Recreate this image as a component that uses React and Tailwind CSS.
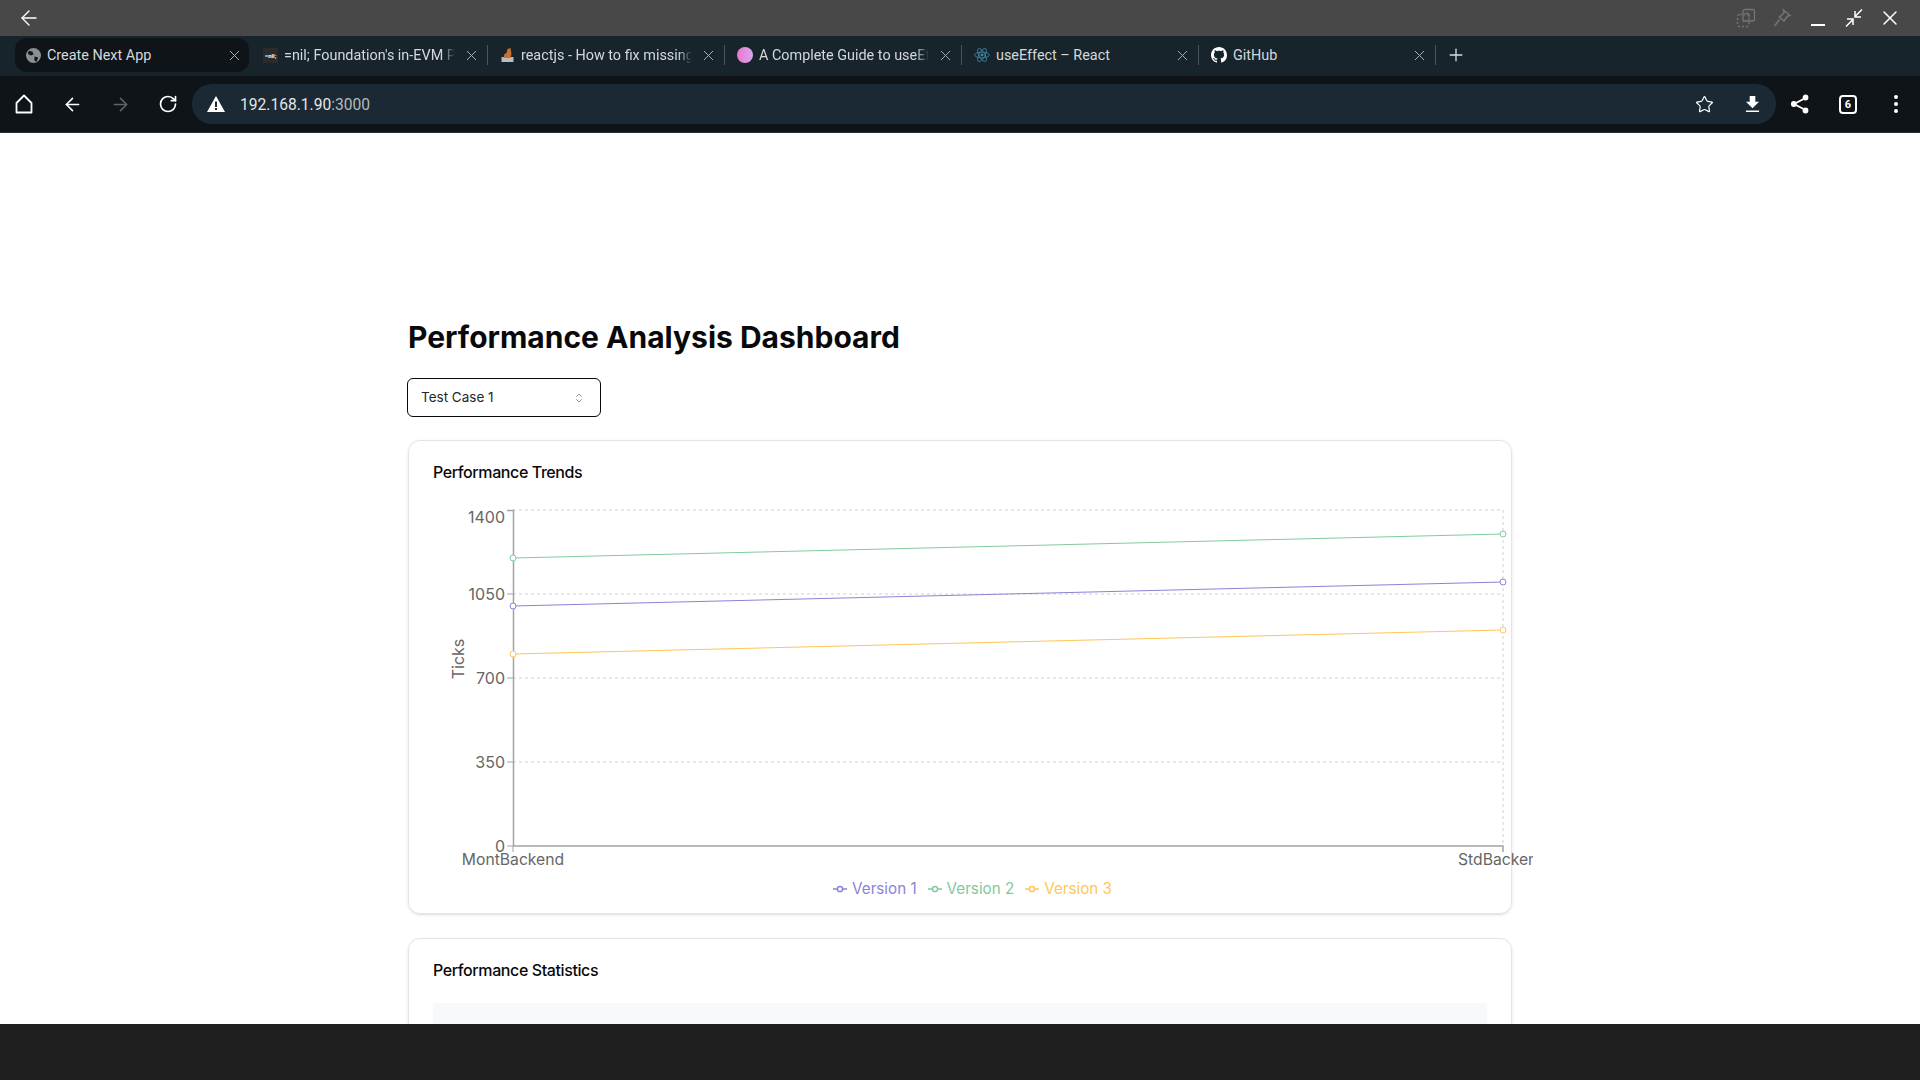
import { ArrowLeft, ArrowRight, RotateCw, Star, Plus, X, ChevronsUpDown } from 'lucide-react';

const tabs = [
  { title: 'Create Next App', active: true, icon: 'globe' },
  { title: "=nil; Foundation's in-EVM Proof", icon: 'nil', fade: true },
  { title: 'reactjs - How to fix missing dependency', icon: 'so', fade: true },
  { title: 'A Complete Guide to useEffect', icon: 'ball', fade: true },
  { title: 'useEffect – React', icon: 'react' },
  { title: 'GitHub', icon: 'github' },
];

function TabIcon({ type }) {
  if (type === 'globe') return (
    <svg viewBox="0 0 16 16" className="w-[15px] h-[15px] shrink-0">
      <circle cx="8" cy="8" r="8" fill="#8a8f93" />
      <path d="M3 3l4 1 1 3-3 1-3-2zM9 9l4 1-2 5-2-2z" fill="#0e1418" />
    </svg>
  );
  if (type === 'nil') return <div className="w-[15px] h-[15px] shrink-0 bg-[#2b2b2b] text-white text-[6px] leading-[15px] text-center font-bold overflow-hidden">=nil;</div>;
  if (type === 'so') return (
    <svg viewBox="0 0 14 16" className="w-[15px] h-[16px] shrink-0">
      <path d="M1 15v-5h12v5z" fill="#bcbbbb" />
      <path d="M3 11l1-4 2-1 1-4 3-1 1 6-1 4z" fill="#c8702c" />
    </svg>
  );
  if (type === 'ball') return <div className="w-[16px] h-[16px] shrink-0 rounded-full bg-gradient-to-r from-[#ee74cf] to-[#d5a6ec]" />;
  if (type === 'react') return (
    <svg viewBox="-12 -12 24 24" className="w-[16px] h-[16px] shrink-0" fill="none" stroke="#3f8ba8" strokeWidth="1.2">
      <circle r="2.2" fill="#3f8ba8" stroke="none" />
      <ellipse rx="11" ry="4.4" />
      <ellipse rx="11" ry="4.4" transform="rotate(60)" />
      <ellipse rx="11" ry="4.4" transform="rotate(120)" />
    </svg>
  );
  return (
    <svg viewBox="0 0 16 16" className="w-[16px] h-[16px] shrink-0" fill="#fff">
      <path d="M8 0C3.58 0 0 3.58 0 8c0 3.54 2.29 6.53 5.47 7.59.4.07.55-.17.55-.38 0-.19-.01-.82-.01-1.49-2.01.37-2.53-.49-2.69-.94-.09-.23-.48-.94-.82-1.13-.28-.15-.68-.52-.01-.53.63-.01 1.08.58 1.23.82.72 1.21 1.87.87 2.33.66.07-.52.28-.87.51-1.07-1.78-.2-3.64-.89-3.64-3.95 0-.87.31-1.59.82-2.15-.08-.2-.36-1.02.08-2.12 0 0 .67-.21 2.2.82.64-.18 1.32-.27 2-.27s1.36.09 2 .27c1.53-1.04 2.2-.82 2.2-.82.44 1.1.16 1.92.08 2.12.51.56.82 1.27.82 2.15 0 3.07-1.87 3.75-3.65 3.95.29.25.54.73.54 1.48 0 1.07-.01 1.93-.01 2.2 0 .21.15.46.55.38A8.01 8.01 0 0 0 16 8c0-4.42-3.58-8-8-8z" />
    </svg>
  );
}

function Tab({ tab }) {
  return (
    <>
      <div className={`w-[234px] h-[34px] shrink-0 flex items-center gap-[6px] pl-[11px] pr-[6px] rounded-[12px] ${tab.active ? 'bg-[#0e1418]' : ''}`}>
        <TabIcon type={tab.icon} />
        <span className={`flex-1 min-w-0 whitespace-nowrap overflow-hidden text-[14.4px] leading-[20px] pt-px text-[#d4d8da] ${tab.fade ? '[mask-image:linear-gradient(to_right,black_92%,transparent)]' : ''}`}>{tab.title}</span>
        <X className="w-[17px] h-[17px] text-[#a9aeb1] shrink-0 ml-[2px]" strokeWidth={1.4} />
      </div>
      <div className="w-[3px] h-[20px] shrink-0 flex justify-center">
        {!tab.active && <div className="w-px h-full bg-[#4b5459]" />}
      </div>
    </>
  );
}

function LegendItem({ label, color, stroke }) {
  return (
    <div className={`flex items-center gap-[5px] ${color}`}>
      <svg viewBox="0 0 14 14" className="w-[14px] h-[14px]" fill="none" stroke={stroke} strokeWidth="1.5">
        <path d="M0 7h4.500M9.500 7h4.500" />
        <circle cx="7" cy="7" r="2.6" />
      </svg>
      <span>{label}</span>
    </div>
  );
}

function TrendChart() {
  const gridY = [510, 594, 678, 762];
  const ticks = [
    { label: '1400', y: 523 },
    { label: '1050', y: 600 },
    { label: '700', y: 684 },
    { label: '350', y: 768 },
    { label: '0', y: 852 },
  ];
  const series = [
    { color: '#8884d8', y1: 606, y2: 582 },
    { color: '#82ca9d', y1: 558, y2: 534 },
    { color: '#ffc658', y1: 654, y2: 630 },
  ];
  return (
    <svg viewBox="408 490 1104 385" className="w-[1104px] h-[385px] overflow-visible block">
      <defs>
        <clipPath id="chart-clip"><rect x="408" y="490" width="1125" height="385" /></clipPath>
      </defs>
      <g stroke="#d0d0d0" strokeDasharray="3 3" fill="none">
        {gridY.map((y) => <line key={y} x1="513" x2="1503" y1={y} y2={y} />)}
        <line x1="1503" x2="1503" y1="510" y2="846" />
      </g>
      <g stroke="#a3a3a3" fill="none">
        <path d="M507 510.5h6.500V846" strokeWidth="1.5" />
        <path d="M513 846h990v6" strokeWidth="1.5" />
        {[594, 678, 762, 846].map((y) => <line key={y} x1="507" x2="513" y1={y} y2={y} />)}
        <line x1="513" x2="513" y1="846" y2="852" />
      </g>
      <g fill="#666" fontSize="16" textAnchor="end">
        {ticks.map((t) => <text key={t.label} x="505" y={t.y}>{t.label}</text>)}
      </g>
      <text fill="#666" fontSize="16" textAnchor="middle" transform="translate(464 659) rotate(-90)">Ticks</text>
      <g fill="#666" fontSize="15.7" clipPath="url(#chart-clip)">
        <text x="513" y="865" textAnchor="middle">MontBackend</text>
        <text x="1458" y="865">StdBackend</text>
      </g>
      {series.map((s) => (
        <g key={s.color} stroke={s.color} fill="#fff">
          <line x1="513" x2="1503" y1={s.y1} y2={s.y2} />
          <circle cx="513" cy={s.y1} r="3" />
          <circle cx="1503" cy={s.y2} r="3" />
        </g>
      ))}
    </svg>
  );
}

export default function App() {
  return (
    <div className="w-[1920px] h-[1080px] overflow-hidden flex flex-col bg-[#1f1f1f] font-['Inter','Liberation_Sans',sans-serif]">
      {/* title strip */}
      <div className="h-[36px] shrink-0 bg-[#484848] flex items-center justify-between pr-[12px] font-['Roboto',sans-serif]">
        <div className="w-[58px] flex justify-center">
          <ArrowLeft className="w-[24px] h-[24px] text-white" strokeWidth={1.4} />
        </div>
        <div className="flex items-center">
          <div className="w-[36px] flex justify-center">
            <svg viewBox="0 0 20 20" className="w-[20px] h-[20px]" fill="none" stroke="#757575" strokeWidth="1.3">
              <path d="M7 13V3.500a2 2 0 0 1 2-2h7.500a2 2 0 0 1 2 2V11a2 2 0 0 1-2 2z" />
              <path d="M9.500 5.500h2.500l1 1v3" />
              <rect x="1.500" y="6.500" width="11.500" height="12" rx="2" strokeDasharray="2 2" />
            </svg>
          </div>
          <div className="w-[36px] flex justify-center">
            <svg viewBox="0 0 20 20" className="w-[20px] h-[20px]" fill="none" stroke="#757575" strokeWidth="1.5">
              <path d="M11.500 2l6.500 5.500-2.500.5-3.500 5-4.500-4 4.500-4z" />
              <path d="M7.500 11.500L2.500 18" />
            </svg>
          </div>
          <div className="w-[36px] flex justify-center">
            <div className="w-[14px] h-[2px] bg-white translate-y-[7px]" />
          </div>
          <div className="w-[36px] flex justify-center">
            <svg viewBox="0 0 20 20" className="w-[20px] h-[20px]" fill="none" stroke="#fff" strokeWidth="1.5">
              <path d="M18 1.500l-7 7M11 3v6h6M2 18.500l7-7M3 11h6v6" />
            </svg>
          </div>
          <div className="w-[36px] flex justify-center">
            <X className="w-[24px] h-[24px] text-white" strokeWidth={1.5} />
          </div>
        </div>
      </div>

      {/* tab strip */}
      <div className="h-[40px] shrink-0 bg-[#17242b] flex items-center pl-[15px] pb-[2px] font-['Roboto',sans-serif]">
        {tabs.map((t) => <Tab key={t.title} tab={t} />)}
        <Plus className="w-[20px] h-[20px] text-[#d8dbdc] ml-[9px]" strokeWidth={1.6} />
      </div>

      {/* toolbar */}
      <div className="h-[57px] shrink-0 bg-[#0e1418] flex items-center border-b border-[#2a2f33] font-['Roboto',sans-serif]">
        <div className="w-[48px] flex justify-center">
          <svg viewBox="0 0 20 20" className="w-[20px] h-[20px]" fill="none" stroke="#fff" strokeWidth="1.8" strokeLinejoin="round">
            <path d="M10 1.500L2.500 9v9.500h15V9z" />
          </svg>
        </div>
        <div className="w-[48px] flex justify-center">
          <ArrowLeft className="w-[21px] h-[21px] text-white" strokeWidth={1.8} />
        </div>
        <div className="w-[48px] flex justify-center">
          <ArrowRight className="w-[21px] h-[21px] text-[#5f6467]" strokeWidth={1.8} />
        </div>
        <div className="w-[48px] flex justify-center">
          <RotateCw className="w-[20px] h-[20px] text-white" strokeWidth={2} />
        </div>
        <div className="h-[40px] w-[1584px] rounded-[20px] bg-[#1a2933] flex items-center">
          <div className="w-[48px] flex justify-center">
            <svg viewBox="0 0 18 16" className="w-[18px] h-[16px]">
              <path d="M9 0l9 16H0z" fill="#fff" />
              <path d="M8 5.500h2v5.500H8zM8 12h2v2H8z" fill="#1a2933" />
            </svg>
          </div>
          <span className="text-[15.6px] leading-[24px] pt-px text-[#b4babd]"><span className="text-[#e4e6e7]">192.168.1.90</span>:3000</span>
          <div className="w-[48px] flex justify-center ml-auto">
            <Star className="w-[19px] h-[19px] text-white" strokeWidth={1.5} />
          </div>
          <div className="w-[48px] flex justify-center">
            <svg viewBox="0 0 16 18" className="w-[15px] h-[17px]" fill="#fff">
              <path d="M5 0h6v6h4l-7 7-7-7h4zM1 15.500h14V17H1z" />
            </svg>
          </div>
        </div>
        <div className="w-[48px] flex justify-center">
          <svg viewBox="0 0 20 20" className="w-[20px] h-[20px]" fill="#fff" stroke="#fff" strokeWidth="1.4">
            <path d="M15.500 4L4 10l11.500 6" fill="none" strokeWidth="1.8" />
            <circle cx="15.500" cy="3.500" r="2.200" />
            <circle cx="3.800" cy="10" r="2.200" />
            <circle cx="15.500" cy="16.500" r="2.200" />
          </svg>
        </div>
        <div className="w-[48px] flex justify-center">
          <div className="w-[18px] h-[19px] rounded-[4px] border-2 border-white text-white text-[11px] font-bold leading-[15px] text-center">6</div>
        </div>
        <div className="w-[48px] flex flex-col items-center gap-[3px]">
          <div className="w-[4px] h-[4px] rounded-full bg-white" />
          <div className="w-[4px] h-[4px] rounded-full bg-white" />
          <div className="w-[4px] h-[4px] rounded-full bg-white" />
        </div>
      </div>

      {/* page */}
      <div className="h-[891px] shrink-0 overflow-hidden bg-white">
        <div className="w-[1104px] mx-auto pt-[186px] text-[#09090b]">
          <h1 className="text-[30px] leading-[36px] font-bold">Performance Analysis Dashboard</h1>
          <button className="mt-[23px] w-[194px] h-[39px] rounded-[6px] border border-[#09090b] flex items-center justify-between pl-[13px] pr-[15px] text-[13.5px] text-[#27272a] -ml-px">
            <span>Test Case 1</span>
            <ChevronsUpDown className="w-[12px] h-[12px] text-[#71717a]" strokeWidth={1.5} />
          </button>
          <div className="mt-[23px] h-[474px] rounded-[12px] border border-[#e4e4e7] shadow-sm px-[24px] pt-[22px]">
            <h2 className="text-[16px] leading-[16px] font-[550] tracking-tight pt-[1px]">Performance Trends</h2>
            <div className="-mx-[25px] mt-[10px]">
              <TrendChart />
            </div>
            <div className="h-[26px] flex items-center justify-center gap-[11px] pl-[25px] pt-[2px] text-[15.2px]">
              <LegendItem label="Version 1" color="text-[#8884d8]" stroke="#8884d8" />
              <LegendItem label="Version 2" color="text-[#82ca9d]" stroke="#82ca9d" />
              <LegendItem label="Version 3" color="text-[#ffc658]" stroke="#ffc658" />
            </div>
          </div>
          <div className="mt-[24px] h-[200px] rounded-[12px] border border-[#e4e4e7] shadow-sm px-[24px] pt-[22px]">
            <h2 className="text-[16px] leading-[16px] font-[550] tracking-tight pt-[1px]">Performance Statistics</h2>
            <div className="mt-[25px] h-[100px] bg-[#f8f9fb]" />
          </div>
        </div>
      </div>
    </div>
  );
}
